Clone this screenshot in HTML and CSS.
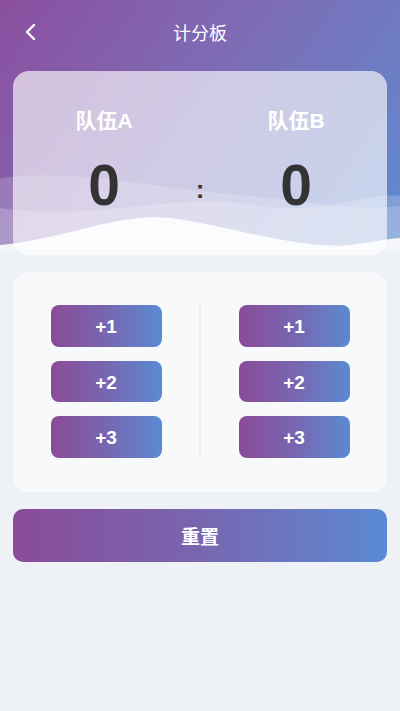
FILE: index.html
```html
<!DOCTYPE html>
<html lang="zh-CN">
<head>
  <meta charset="UTF-8">
  <meta name="viewport" content="width=device-width, initial-scale=1.0">
  <title>计分板</title>
  <link rel="stylesheet" href="styles.css">
</head>
<body>

  <div class="page">
    <!-- gradient backdrop with waves behind the top area -->
    <div class="backdrop">
      <svg class="waves" viewBox="0 0 400 100" preserveAspectRatio="none">
        <path d="M0 28 C 80 18, 150 38, 230 44 C 300 50, 350 62, 400 56 L400 100 L0 100 Z" fill="rgba(255,255,255,0.18)"/>
        <path d="M0 58 C 100 72, 180 40, 260 56 C 320 66, 360 42, 400 46 L400 100 L0 100 Z" fill="rgba(255,255,255,0.2)"/>
        <path d="M0 95 C 60 90, 120 62, 170 68 C 230 76, 300 100, 350 95 C 375 92, 390 88, 400 88 L400 100 L0 100 Z" fill="#f3f5f8"/>
      </svg>
    </div>

    <div class="nav">
      <svg class="back" viewBox="0 0 14 18" width="14" height="18">
        <path d="M10 2 L3 9 L10 16" fill="none" stroke="#fff" stroke-width="2.4" stroke-linecap="round" stroke-linejoin="round"/>
      </svg>
      <div class="nav-title">计分板</div>
    </div>

    <div class="score-card">
      <div class="team">
        <div class="team-name">队伍A</div>
        <div class="score" id="scoreA">0</div>
      </div>
      <div class="colon">:</div>
      <div class="team">
        <div class="team-name">队伍B</div>
        <div class="score" id="scoreB">0</div>
      </div>
    </div>

    <div class="controls">
      <div class="col" data-team="A">
        <button class="add" data-n="1">+1</button>
        <button class="add" data-n="2">+2</button>
        <button class="add" data-n="3">+3</button>
      </div>
      <div class="divider"></div>
      <div class="col" data-team="B">
        <button class="add" data-n="1">+1</button>
        <button class="add" data-n="2">+2</button>
        <button class="add" data-n="3">+3</button>
      </div>
    </div>

    <button class="reset" id="resetBtn">重置</button>
  </div>

  <script>
    const scores = { A: 0, B: 0 };

    document.querySelectorAll('.col').forEach(col => {
      col.querySelectorAll('.add').forEach(btn => {
        btn.addEventListener('click', () => {
          const team = col.dataset.team;
          scores[team] += Number(btn.dataset.n);
          document.getElementById('score' + team).textContent = scores[team];
        });
      });
    });

    document.getElementById('resetBtn').addEventListener('click', () => {
      scores.A = 0;
      scores.B = 0;
      document.getElementById('scoreA').textContent = 0;
      document.getElementById('scoreB').textContent = 0;
    });
  </script>

</body>
</html>
```

FILE: styles.css
```css
body {
  margin: 0;
  background-color: #eef2f6;
  font-family: "Liberation Sans", "Noto Sans CJK SC", sans-serif;
}
.page {
  position: relative;
  min-height: 711px;
  padding: 0 13px;
}
.backdrop {
  position: absolute;
  top: 0;
  left: 0;
  right: 0;
  height: 250px;
  background: linear-gradient(125deg, #8b4f9f 0%, #7e6bb4 45%, #5f8bd0 100%);
  overflow: hidden;
}
.waves {
  position: absolute;
  left: 0;
  bottom: 0;
  width: 100%;
  height: 100px;
  display: block;
}
.nav {
  position: relative;
  height: 64px;
  display: flex;
  align-items: center;
  justify-content: center;
  margin: 0 -13px 7px;
}
.back {
  position: absolute;
  left: 24px;
  top: 23px;
}
.nav-title {
  color: white;
  font-size: 18px;
}
.score-card {
  position: relative;
  height: 184px;
  box-sizing: border-box;
  display: grid;
  grid-template-columns: 1fr 10px 1fr;
  background: rgba(255, 255, 255, 0.64);
  border-radius: 16px;
}
.team {
  display: flex;
  flex-direction: column;
  align-items: center;
}
.team-name {
  margin-top: 35px;
  color: white;
  font-size: 21px;
  font-weight: bold;
  line-height: 30px;
}
.score {
  margin-top: 14px;
  color: #333;
  font-size: 57px;
  font-weight: bold;
  line-height: 70px;
}
.colon {
  margin-top: 103px;
  text-align: center;
  color: #333;
  font-size: 26px;
  font-weight: bold;
  line-height: 30px;
}
.controls {
  position: relative;
  margin-top: 17px;
  height: 220px;
  box-sizing: border-box;
  padding: 33px 0 34px;
  display: flex;
  background-color: #f8f9fb;
  border-radius: 16px;
}
.col {
  flex: 1;
  display: flex;
  flex-direction: column;
  align-items: center;
  gap: 14px;
}
.divider {
  width: 2px;
  background-color: #eceff3;
}
button {
  border: none;
  color: white;
  font-family: "Liberation Sans", "Noto Sans CJK SC", sans-serif;
  font-weight: bold;
  cursor: pointer;
  background: linear-gradient(90deg, #8a4b98 0%, #7866b0 50%, #5a8ad2 100%);
}
.add {
  width: 111px;
  height: 42px;
  padding-top: 3px;
  border-radius: 8px;
  font-size: 19px;
}
.reset {
  position: relative;
  display: block;
  width: 100%;
  height: 53px;
  margin-top: 17px;
  border-radius: 10px;
  font-size: 19px;
}
```
